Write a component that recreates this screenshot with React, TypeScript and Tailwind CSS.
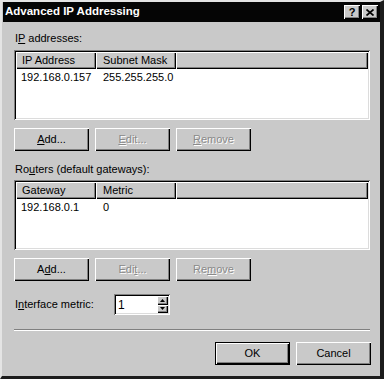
const raised =
  "shadow-[inset_1px_1px_0_#ffffff,inset_-1px_-1px_0_#000000,inset_-2px_-2px_0_#808080]";
const sunken =
  "shadow-[inset_1px_1px_0_#808080,inset_-1px_-1px_0_#ffffff,inset_2px_2px_0_#000000,inset_-2px_-2px_0_#dcdcdc]";
const disabledText = "text-[#8a8a8a] [text-shadow:1px_1px_0_#ffffff]";

function Button({
  children,
  disabled,
  isDefault,
}: {
  children: React.ReactNode;
  disabled?: boolean;
  isDefault?: boolean;
}) {
  return (
    <div
      className={`w-[75px] h-[23px] flex items-center justify-center bg-[#c9c9c9] ${
        isDefault ? "border border-black" : ""
      } ${raised} ${disabled ? disabledText : "text-black"}`}
    >
      {children}
    </div>
  );
}

function ButtonRow({ hot }: { hot: [string, string, string] }) {
  const u = (word: string, key: string) => {
    const i = word.indexOf(key);
    return (
      <>
        {word.slice(0, i)}
        <span className="underline underline-offset-[1px]">{key}</span>
        {word.slice(i + 1)}
      </>
    );
  };
  return (
    <div className="flex gap-[6px] h-[23px]">
      <Button>{u("Add...", hot[0])}</Button>
      <Button disabled>{u("Edit...", hot[1])}</Button>
      <Button disabled>{u("Remove", hot[2])}</Button>
    </div>
  );
}

function ListBox({ cols, row }: { cols: [string, string]; row: [string, string] }) {
  return (
    <div className={`h-[70px] bg-white p-[2px] ${sunken}`}>
      <div className="flex h-[17px] bg-[#c9c9c9]">
        <div className={`w-[80px] flex items-center pl-[6px] ${raised}`}>{cols[0]}</div>
        <div className={`w-[80px] flex items-center pl-[7px] ${raised}`}>{cols[1]}</div>
        <div className={`flex-1 ${raised}`} />
      </div>
      <div className="flex leading-[13px] pt-[2px]">
        <div className="w-[80px] pl-[5px]">{row[0]}</div>
        <div className="w-[80px] pl-[7px]">{row[1]}</div>
      </div>
    </div>
  );
}

export default function App() {
  return (
    <div className="w-[384px] h-[379px] bg-[#c9c9c9] border-t-2 border-l-2 border-r-4 border-b-[3px] border-t-[#e4e4e4] border-l-[#e4e4e4] border-r-[#1c1c1c] border-b-[#1c1c1c] flex flex-col font-['Liberation_Sans',Arial,sans-serif] text-[11px] text-black">
      {/* title bar */}
      <div className="h-[20px] ml-[1px] bg-[#050505] flex items-center justify-between pl-[2px] pr-[2px]">
        <span className="text-white font-bold text-[11.5px]">Advanced IP Addressing</span>
        <div className="flex gap-[2px]">
          <div className={`w-[16px] h-[14px] bg-[#c9c9c9] flex items-center justify-center font-bold text-[11px] leading-none ${raised}`}>
            ?
          </div>
          <div className={`w-[16px] h-[14px] bg-[#c9c9c9] flex items-center justify-center ${raised}`}>
            <svg width="8" height="7" viewBox="0 0 8 7">
              <path d="M0.5 0.5 L7.5 6.5 M7.5 0.5 L0.5 6.5" stroke="#000" strokeWidth="1.7" />
            </svg>
          </div>
        </div>
      </div>

      {/* body */}
      <div className="flex flex-col pl-[12px] pr-[10px]">
        <div className="mt-[10px] leading-[13px] pl-[1px]">
          I<span className="underline underline-offset-[1px]">P</span> addresses:
        </div>
        <div className="mt-[5px]">
          <ListBox cols={["IP Address", "Subnet Mask"]} row={["192.168.0.157", "255.255.255.0"]} />
        </div>
        <div className="mt-[8px]">
          <ButtonRow hot={["A", "E", "R"]} />
        </div>

        <div className="mt-[12px] leading-[13px] pl-[1px]">
          Ro<span className="underline underline-offset-[1px]">u</span>ters (default gateways):
        </div>
        <div className="mt-[4px]">
          <ListBox cols={["Gateway", "Metric"]} row={["192.168.0.1", "0"]} />
        </div>
        <div className="mt-[8px]">
          <ButtonRow hot={["d", "t", "m"]} />
        </div>

        <div className="mt-[13px] h-[21px] flex items-center">
          <div className="w-[100px] pl-[1px]">
            I<span className="underline underline-offset-[1px]">n</span>terface metric:
          </div>
          <div className={`w-[56px] h-[21px] bg-white p-[2px] flex ${sunken}`}>
            <div className="flex-1 pl-[2px] flex items-center text-[12px]">1</div>
            <div className="w-[11px] flex flex-col">
              <div className={`flex-1 bg-[#c9c9c9] flex items-center justify-center ${raised}`}>
                <svg width="5" height="3" viewBox="0 0 5 3">
                  <path d="M2.5 0 L5 3 L0 3 Z" fill="#000" />
                </svg>
              </div>
              <div className={`flex-1 bg-[#c9c9c9] flex items-center justify-center ${raised}`}>
                <svg width="5" height="3" viewBox="0 0 5 3">
                  <path d="M0 0 L5 0 L2.5 3 Z" fill="#000" />
                </svg>
              </div>
            </div>
          </div>
        </div>

        <div className="mt-[14px] border-t border-b border-t-[#808080] border-b-white" />

        <div className="mt-[11px] flex justify-end gap-[6px] -mr-[1px]">
          <Button isDefault>OK</Button>
          <Button>Cancel</Button>
        </div>
      </div>
    </div>
  );
}
